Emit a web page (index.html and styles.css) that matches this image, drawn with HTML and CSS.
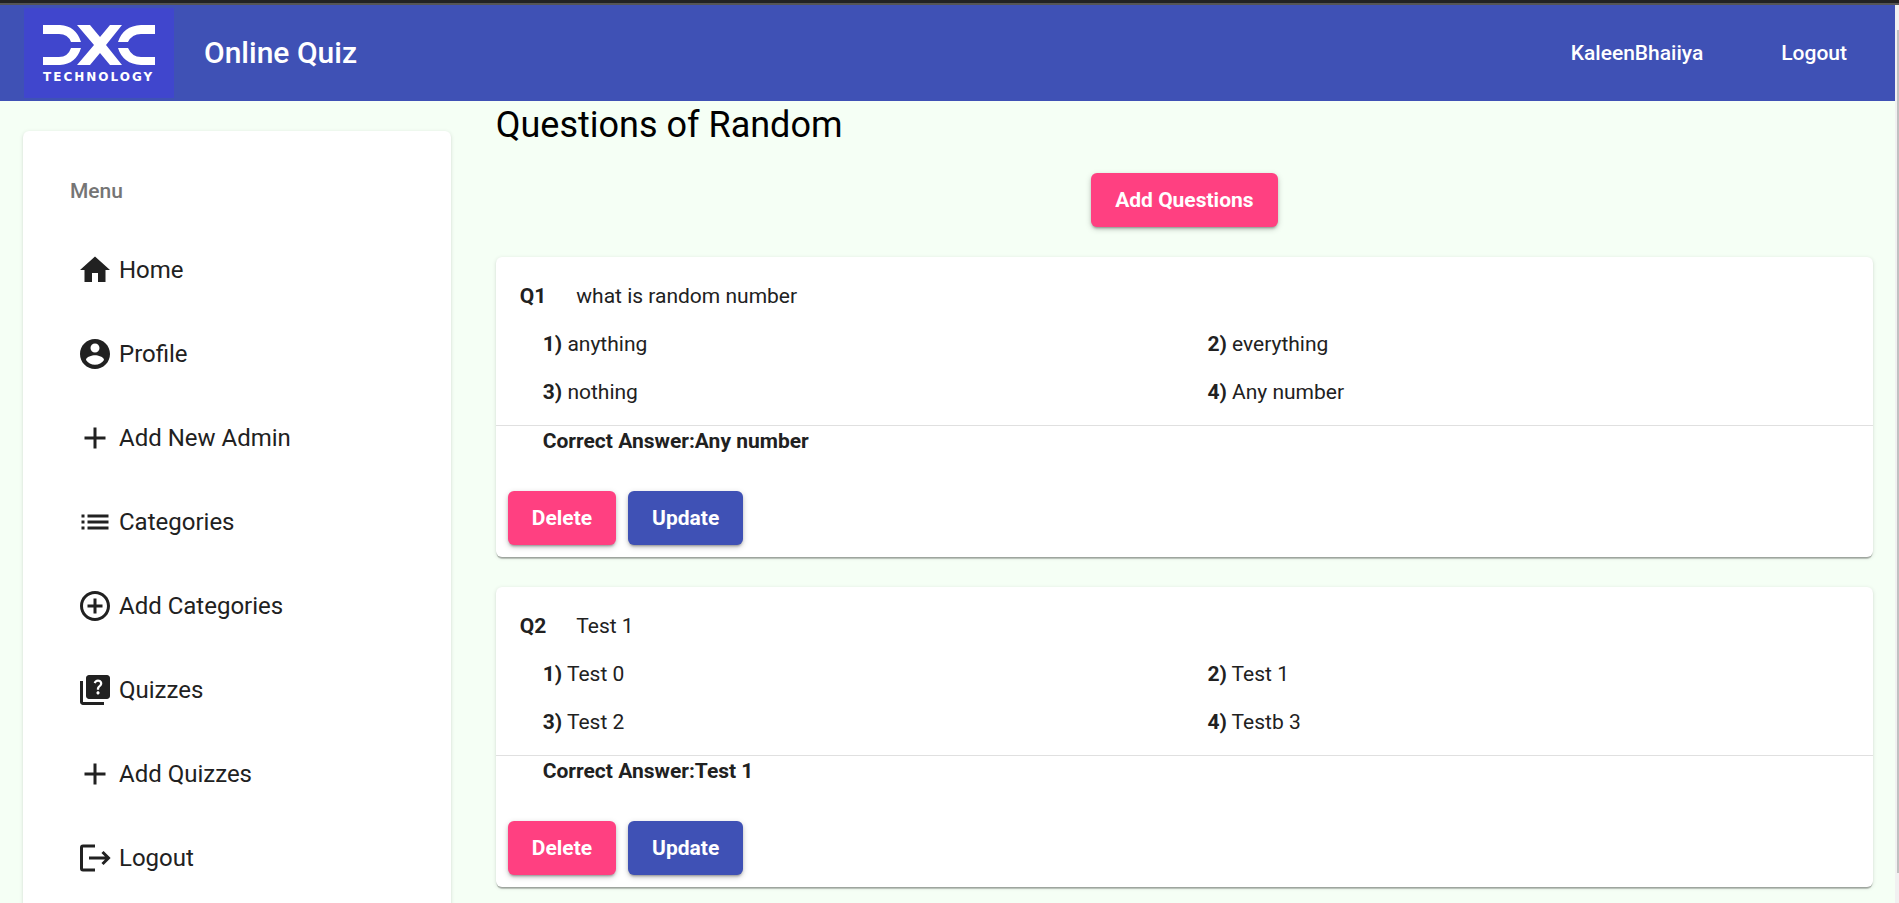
FILE: index.html
```html
<!DOCTYPE html>
<html lang="en">
<head>
<meta charset="utf-8">
<title>Online Quiz</title>
<link rel="stylesheet" href="styles.css">
</head>
<body>
<div class="window-edge"></div>
<div class="viewport">
  <div class="page">
    <header class="navbar">
      <svg class="logo" viewBox="0 0 150 90" role="img" aria-label="DXC Technology">
        <rect width="150" height="90" fill="#4046cd"/>
        <g fill="#fff">
          <path d="M19 17H36Q52 18 57 34H47Q44 26 35 26H19Z"/>
          <path d="M19 57H36Q52 56 57 40H47Q44 49 35 49H19Z"/>
          <path d="M131 17H117Q99 18 94 34H104Q108 26 117 26H131Z"/>
          <path d="M131 57H117Q99 56 94 40H104Q108 49 117 49H131Z"/>
          <path d="M53 17H66L76 29L86 17H98L82 37L98 57H86L76 45L66 57H53L70 37Z"/>
        </g>
        <text class="logo-text" x="19" y="73">TECHNOLOGY</text>
      </svg>
      <h1 class="brand">Online Quiz</h1>
      <nav class="nav-links">
        <a class="nav-link" href="#profile">KaleenBhaiiya</a>
        <a class="nav-link" href="#logout">Logout</a>
      </nav>
    </header>
    <div class="layout">
      <aside class="sidebar card">
        <h2 class="menu-title">Menu</h2>
        <nav class="menu">
          <a class="menu-item" href="#home"><svg class="icon" viewBox="0 0 24 24"><path d="M10 20v-6h4v6h5v-8h3L12 3 2 12h3v8z"/></svg>Home</a>
          <a class="menu-item" href="#profile"><svg class="icon" viewBox="0 0 24 24"><path d="M12 2C6.480 2 2 6.480 2 12s4.480 10 10 10 10-4.480 10-10S17.520 2 12 2zm0 3c1.660 0 3 1.340 3 3s-1.340 3-3 3-3-1.340-3-3 1.340-3 3-3zm0 14.200c-2.500 0-4.710-1.280-6-3.220.030-1.990 4-3.080 6-3.080 1.990 0 5.970 1.090 6 3.080-1.290 1.940-3.500 3.220-6 3.220z"/></svg>Profile</a>
          <a class="menu-item" href="#add-admin"><svg class="icon" viewBox="0 0 24 24"><path d="M19 13h-6v6h-2v-6H5v-2h6V5h2v6h6v2z"/></svg>Add New Admin</a>
          <a class="menu-item" href="#categories"><svg class="icon" viewBox="0 0 24 24"><path d="M3 13h2v-2H3v2zm0 4h2v-2H3v2zm0-8h2V7H3v2zm4 4h14v-2H7v2zm0 4h14v-2H7v2zM7 7v2h14V7H7z"/></svg>Categories</a>
          <a class="menu-item" href="#add-category"><svg class="icon" viewBox="0 0 24 24"><path d="M13 7h-2v4H7v2h4v4h2v-4h4v-2h-4V7zm-1-5C6.480 2 2 6.480 2 12s4.480 10 10 10 10-4.480 10-10S17.520 2 12 2zm0 18c-4.410 0-8-3.590-8-8s3.590-8 8-8 8 3.590 8 8-3.590 8-8 8z"/></svg>Add Categories</a>
          <a class="menu-item" href="#quizzes"><svg class="icon" viewBox="0 0 24 24"><path d="M4 6H2v14c0 1.100.9 2 2 2h14v-2H4V6zm16-4H8c-1.100 0-2 .9-2 2v12c0 1.100.9 2 2 2h12c1.100 0 2-.9 2-2V4c0-1.100-.9-2-2-2zm-5.990 13c-.590 0-1.050-.470-1.050-1.050 0-.590.470-1.040 1.050-1.040.590 0 1.040.450 1.040 1.040-.010.580-.450 1.050-1.040 1.050zm2.500-6.170c-.630.930-1.230 1.210-1.560 1.810-.130.240-.180.400-.180 1.180h-1.520c0-.410-.060-1.080.260-1.650.410-.730 1.180-1.160 1.630-1.800.480-.680.210-1.940-1.140-1.940-.880 0-1.320.670-1.500 1.230l-1.370-.570C11.510 5.960 12.520 5 13.990 5c1.230 0 2.080.560 2.510 1.260.370.610.580 1.730.010 2.570z"/></svg>Quizzes</a>
          <a class="menu-item" href="#add-quiz"><svg class="icon" viewBox="0 0 24 24"><path d="M19 13h-6v6h-2v-6H5v-2h6V5h2v6h6v2z"/></svg>Add Quizzes</a>
          <a class="menu-item" href="#logout"><svg class="icon icon-outline" viewBox="0 0 24 24"><path d="M12 4H4Q3 4 3 5V19Q3 20 4 20H12M8 12H21M17 8l4 4-4 4"/></svg>Logout</a>
        </nav>
      </aside>
      <main class="content">
        <h2 class="page-title">Questions of Random</h2>
        <div class="toolbar"><button class="btn btn-accent" type="button">Add Questions</button></div>
        <article class="question card">
          <div class="question-body">
            <p class="question-text"><b class="number">Q1</b>what is random number</p>
            <div class="options">
              <p><b>1)</b> anything</p>
              <p><b>2)</b> everything</p>
              <p><b>3)</b> nothing</p>
              <p><b>4)</b> Any number</p>
            </div>
          </div>
          <p class="answer">Correct Answer:Any number</p>
          <div class="actions">
            <button class="btn btn-accent" type="button">Delete</button>
            <button class="btn btn-primary" type="button">Update</button>
          </div>
        </article>
        <article class="question card">
          <div class="question-body">
            <p class="question-text"><b class="number">Q2</b>Test 1</p>
            <div class="options">
              <p><b>1)</b> Test 0</p>
              <p><b>2)</b> Test 1</p>
              <p><b>3)</b> Test 2</p>
              <p><b>4)</b> Testb 3</p>
            </div>
          </div>
          <p class="answer">Correct Answer:Test 1</p>
          <div class="actions">
            <button class="btn btn-accent" type="button">Delete</button>
            <button class="btn btn-primary" type="button">Update</button>
          </div>
        </article>
      </main>
    </div>
  </div>
  <div class="scroll-track"><div class="scroll-thumb"></div></div>
</div>
</body>
</html>
```

FILE: styles.css
```css
* {
  box-sizing: border-box;
}

body {
  display: flex;
  flex-direction: column;
  height: 100vh;
  margin: 0;
  overflow: hidden;
  background: #f5fff5;
  color: #212121;
  font-family: Roboto, "Liberation Sans", sans-serif;
  font-size: 21px;
  line-height: 30px;
}

h1, h2, p {
  margin: 0;
}

a {
  color: inherit;
  text-decoration: none;
}

.window-edge {
  flex: none;
  height: 5px;
  background: #222;
  border-bottom: 2px solid #555;
}

.viewport {
  display: flex;
  flex: 1;
  min-height: 0;
}

.page {
  flex: 1;
  overflow: hidden;
}

.scroll-track {
  width: 4px;
  padding: 25px 0 30px 2px;
  background: #f1f1f1;
}

.scroll-thumb {
  height: 100%;
  background: #c1c1c1;
}

.navbar {
  display: flex;
  align-items: center;
  height: 96px;
  padding: 0 24px;
  background: #3f51b5;
  color: #fff;
}

.logo {
  width: 150px;
  height: 90px;
}

.logo-text {
  fill: #fff;
  font: bold 12px "DejaVu Sans", sans-serif;
  letter-spacing: 2px;
}

.brand {
  margin-left: 30px;
  font-size: 30px;
  font-weight: 500;
}

.nav-links {
  display: flex;
  gap: 30px;
  margin-left: auto;
}

.nav-link {
  padding: 0 24px;
  font-weight: 500;
}

.layout {
  display: grid;
  grid-template-columns: 1fr 3fr;
  align-items: start;
}

.card {
  background: #fff;
  border-radius: 6px;
  box-shadow: 0 3px 1px -1px rgba(0, 0, 0, .2), 0 1px 1px rgba(0, 0, 0, .14), 0 1px 4px rgba(0, 0, 0, .12);
}

.sidebar {
  margin: 30px 23px;
  padding: 24px 24px 36px;
}

.menu-title {
  padding: 21px 23px;
  color: #757575;
  font-size: 21px;
  font-weight: 500;
}

.menu-item {
  display: flex;
  align-items: center;
  gap: 6px;
  height: 84px;
  padding: 1px 30px 0;
  font-size: 24px;
}

.icon {
  width: 36px;
  height: 36px;
  fill: currentColor;
}

.icon-outline {
  fill: none;
  stroke: currentColor;
  stroke-width: 2;
}

.content {
  padding: 0 22px;
}

.page-title {
  color: #000;
  font-size: 36px;
  font-weight: 400;
  line-height: 48px;
}

.toolbar {
  display: flex;
  justify-content: center;
  padding: 24px 0 30px;
}

.btn {
  height: 54px;
  padding: 0 24px;
  border: 0;
  border-radius: 6px;
  color: #fff;
  font: bold 21px Roboto, "Liberation Sans", sans-serif;
  box-shadow: 0 3px 2px -2px rgba(0, 0, 0, .2), 0 2px 3px rgba(0, 0, 0, .14), 0 2px 6px rgba(0, 0, 0, .18);
}

.btn-accent {
  background: #ff4081;
}

.btn-primary {
  background: #3f51b5;
}

.question {
  margin-bottom: 30px;
}

.question-body {
  display: flex;
  flex-direction: column;
  gap: 18px;
  padding: 24px 24px 18px;
  border-bottom: 1px solid #e0e0e0;
}

.number {
  margin-right: 30px;
}

.options {
  display: grid;
  grid-template-columns: 1fr 1fr;
  gap: 18px 0;
  margin: 0 -23px 0 23px;
}

.answer {
  padding: 0 47px;
  font-weight: 700;
}

.actions {
  display: flex;
  gap: 12px;
  padding: 35px 12px 12px;
}
```
